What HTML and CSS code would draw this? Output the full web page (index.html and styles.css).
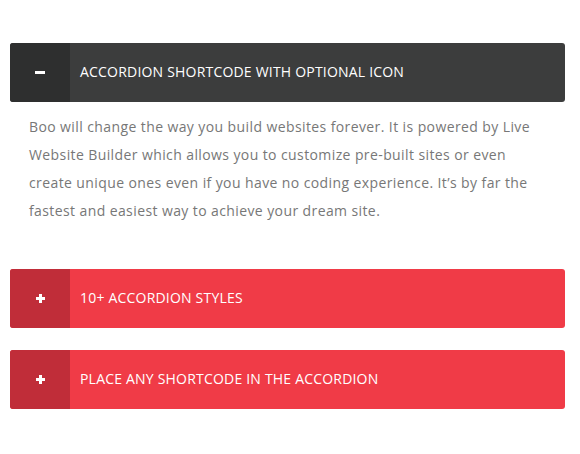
FILE: index.html
```html
<!DOCTYPE html>
<html>
<head>
<meta charset="utf-8">
<link rel="stylesheet" href="styles.css">
</head>
<body>
<div class="accordion">
  <div class="item open">
    <div class="head dark">
      <span class="icon"><span class="minus"></span></span>
      <span class="title">ACCORDION SHORTCODE WITH OPTIONAL ICON</span>
    </div>
    <div class="content">Boo will change the way you build websites forever. It is powered by Live Website Builder which allows you to customize pre-built sites or even create unique ones even if you have no coding experience. It’s by far the fastest and easiest way to achieve your dream site.</div>
  </div>
  <div class="item">
    <div class="head red">
      <span class="icon"><span class="plus"></span></span>
      <span class="title">10+ ACCORDION STYLES</span>
    </div>
  </div>
  <div class="item">
    <div class="head red">
      <span class="icon"><span class="plus"></span></span>
      <span class="title">PLACE ANY SHORTCODE IN THE ACCORDION</span>
    </div>
  </div>
</div>
</body>
</html>
```
FILE: styles.css
```css
html, body { margin: 0; padding: 0; background: #fff; }
body { font-family: "Open Sans", sans-serif; }
.accordion { padding: 43px 15px 0 10px; display: flex; flex-direction: column; }
.item { margin-bottom: 22px; }
.item.open { margin-bottom: 44px; }
.head { display: flex; height: 59px; border-radius: 3px; overflow: hidden; align-items: stretch; }
.head.dark { background: #3c3d3d; }
.head.dark .icon { background: #2e2f2f; }
.head.red { background: #f03b47; }
.head.red .icon { background: #c02d39; }
.icon { width: 60px; flex: none; display: flex; align-items: center; justify-content: center; }
.minus { width: 10px; height: 3px; background: #fff; }
.plus { position: relative; width: 9px; height: 9px; }
.plus::before, .plus::after { content: ""; position: absolute; background: #fff; }
.plus::before { left: 3px; top: 0; width: 3px; height: 9px; }
.plus::after { left: 0; top: 3px; width: 9px; height: 3px; }
.title { display: flex; align-items: center; padding: 0 0 2px 10px; color: #fff; font-size: 14px; font-weight: 500; letter-spacing: 0.2px; }
.content { padding: 11px 0 0 19px; color: #777; font-size: 14px; line-height: 28px; letter-spacing: 0.4px; width: 510px; }
```
